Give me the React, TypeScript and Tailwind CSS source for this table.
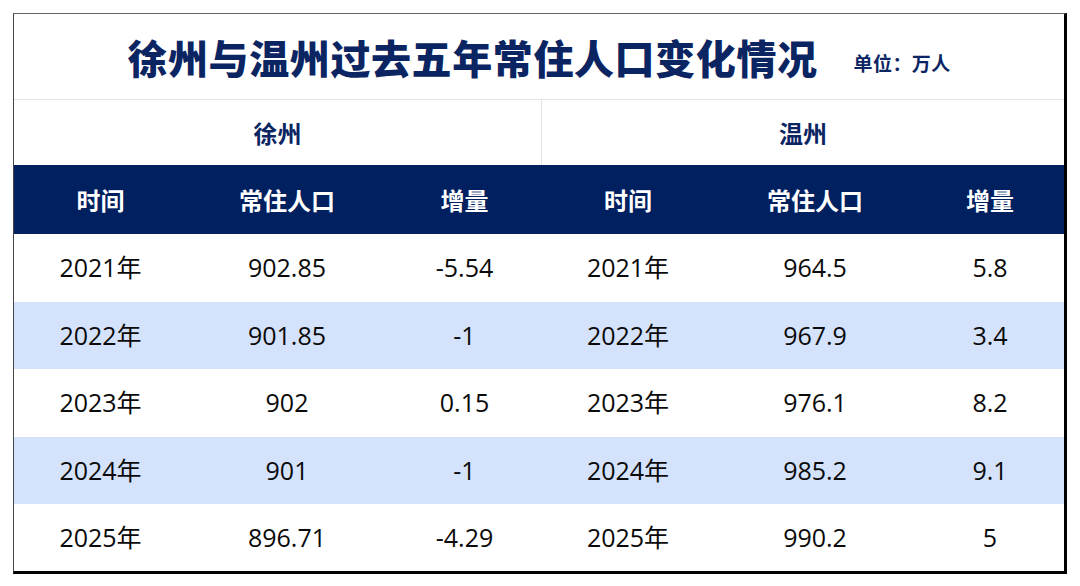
import React from 'react'

const FONT = '"Open Sans", "Noto Sans CJK SC", sans-serif'
const CJK = '"Noto Sans CJK SC", sans-serif'

const cols = ['w-[173px]', 'w-[200px]', 'w-[155px]', 'w-[172px]', 'w-[202px]', 'w-[148px]']
const headers = ['时间', '常住人口', '增量', '时间', '常住人口', '增量']

const rows = [
  ['2021年', '902.85', '-5.54', '2021年', '964.5', '5.8'],
  ['2022年', '901.85', '-1', '2022年', '967.9', '3.4'],
  ['2023年', '902', '0.15', '2023年', '976.1', '8.2'],
  ['2024年', '901', '-1', '2024年', '985.2', '9.1'],
  ['2025年', '896.71', '-4.29', '2025年', '990.2', '5'],
]
const heights = ['h-[68px]', 'h-[67px]', 'h-[68px]', 'h-[67px]', 'h-[67px]']

export default function App() {
  return (
    <div className="h-[586px] w-[1080px] bg-white pl-[13px] pt-[13px]">
      <div className="flex w-[1054px] flex-col border-b-[3px] border-l border-r-[3px] border-t border-b-black border-l-[#444] border-r-black border-t-[#666]">
        {/* title */}
        <div
          className="flex h-[86px] items-center justify-center border-b border-[#e3e3e3] text-[#0b2563]"
          style={{ fontFamily: CJK }}
        >
          <span className="text-[40px] font-black leading-none tracking-[0.6px]">
            徐州与温州过去五年常住人口变化情况
          </span>
          <span className="ml-[36px] mt-[12px] text-[19px] font-bold leading-none tracking-[0.4px]">单位：万人</span>
        </div>

        {/* city row */}
        <div className="flex h-[65px] text-[24px] font-bold text-[#0b2563]" style={{ fontFamily: CJK }}>
          <div className="flex w-[528px] items-center justify-center border-r border-[#e3e3e3]">徐州</div>
          <div className="flex flex-1 items-center justify-center">温州</div>
        </div>

        {/* header */}
        <div className="flex h-[69px] bg-[#002060] text-[24px] font-bold text-white" style={{ fontFamily: CJK }}>
          {headers.map((h, i) => (
            <div key={i} className={`${cols[i]} flex items-center justify-center`}>
              {h}
            </div>
          ))}
        </div>

        {/* data */}
        {rows.map((r, ri) => (
          <div
            key={ri}
            className={`flex ${heights[ri]} text-[25px] text-[#0a0a0a] ${ri % 2 === 1 ? 'bg-[#d4e2fc]' : 'bg-white'}`}
            style={{ fontFamily: FONT }}
          >
            {r.map((c, ci) => (
              <div key={ci} className={`${cols[ci]} flex items-center justify-center`}>
                {c}
              </div>
            ))}
          </div>
        ))}
      </div>
    </div>
  )
}
